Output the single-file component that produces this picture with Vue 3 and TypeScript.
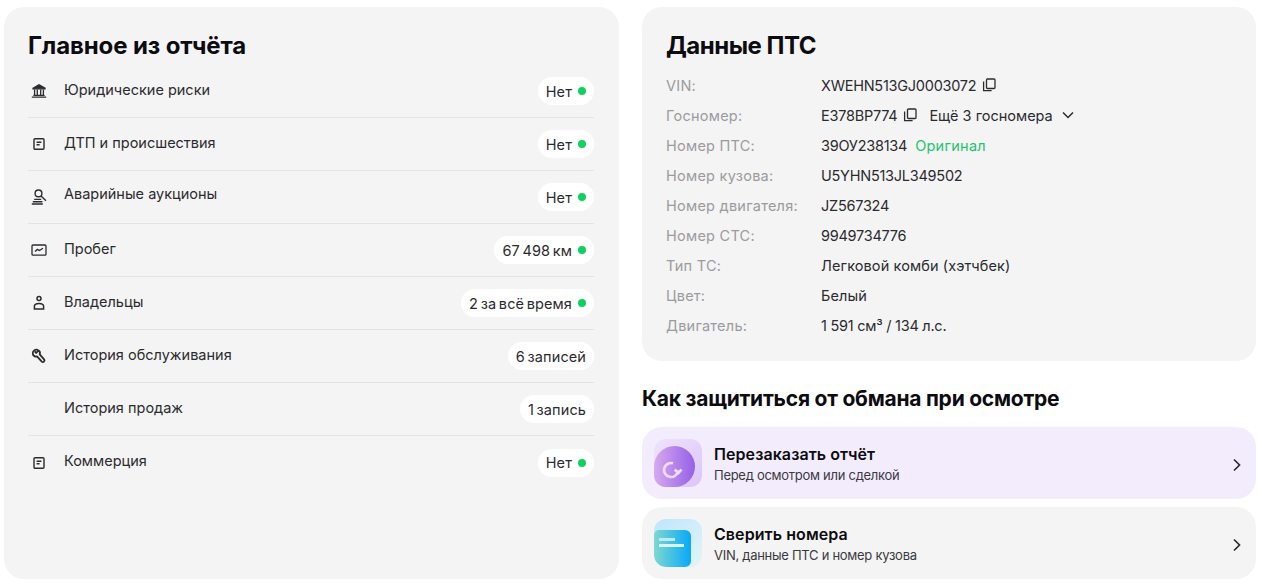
<script setup lang="ts">
interface Row { label: string; value: string; dot: boolean; icon: string }
const rows: Row[] = [
  { label: 'Юридические риски', value: 'Нет', dot: true, icon: 'bank' },
  { label: 'ДТП и происшествия', value: 'Нет', dot: true, icon: 'doc' },
  { label: 'Аварийные аукционы', value: 'Нет', dot: true, icon: 'gavel' },
  { label: 'Пробег', value: '67 498 км', dot: true, icon: 'chart' },
  { label: 'Владельцы', value: '2 за всё время', dot: true, icon: 'person' },
  { label: 'История обслуживания', value: '6 записей', dot: false, icon: 'wrench' },
  { label: 'История продаж', value: '1 запись', dot: false, icon: '' },
  { label: 'Коммерция', value: 'Нет', dot: true, icon: 'doc' },
]
const specs = [
  ['Номер кузова:', 'U5YHN513JL349502', 'lat'],
  ['Номер двигателя:', 'JZ567324', 'lat'],
  ['Номер СТС:', '9949734776', 'lat'],
  ['Тип ТС:', 'Легковой комби (хэтчбек)', 'cyr'],
  ['Цвет:', 'Белый', 'cyr'],
  ['Двигатель:', '1 591 см³ / 134 л.с.', 'lat'],
]
</script>

<template>
  <div class="page">
    <section class="card left">
      <h2 class="title title-main">Главное из отчёта</h2>
      <ul class="rows">
        <li v-for="r in rows" :key="r.label" class="row">
          <span class="ico">
            <svg v-if="r.icon === 'bank'" viewBox="0 0 16 16" width="16" height="16" fill="none" stroke="#2b2b2f" stroke-width="1.3">
              <path d="M2 5.2 8 1.800l6 3.400v.6H2z" fill="#2b2b2f" />
              <path d="M3.600 6.500v5.500M6.300 6.500v5.500M9.700 6.500v5.500M12.400 6.500v5.500M2.400 12.400h11.200M.8 14.200h14.400" />
            </svg>
            <svg v-else-if="r.icon === 'doc'" viewBox="0 0 16 16" width="16" height="16" fill="none" stroke="#2b2b2f" stroke-width="1.4">
              <rect x="3" y="2.700" width="10" height="10.600" rx="1" />
              <path d="M5.600 6.200h4.800M5.600 8.800h3" />
            </svg>
            <svg v-else-if="r.icon === 'gavel'" viewBox="0 0 16 16" width="16" height="16" fill="none" stroke="#2b2b2f" stroke-width="1.400">
              <circle cx="7.500" cy="4.400" r="3.400" />
              <path d="m10 7 5 4.800M3.200 10.400h7M1.800 12.700h9.600M.8 15h11" />
            </svg>
            <svg v-else-if="r.icon === 'chart'" viewBox="0 0 16 16" width="16" height="16" fill="none" stroke="#2b2b2f" stroke-width="1.300">
              <rect x="1" y="3" width="14" height="10.200" rx="1" />
              <path d="m4 9.400 2.400-2 2 1.200L12 6.200" />
            </svg>
            <svg v-else-if="r.icon === 'person'" viewBox="0 0 16 16" width="16" height="16" fill="none" stroke="#2b2b2f" stroke-width="1.500">
              <circle cx="8" cy="3.400" r="2" />
              <path d="M3.400 14v-2.800C3.400 9.600 5 8.400 8 8.400s4.600 1.200 4.600 2.800V14z" />
            </svg>
            <svg v-else-if="r.icon === 'wrench'" viewBox="0 0 16 16" width="16" height="16" fill="none" stroke="#2b2b2f" stroke-width="1.800" stroke-linejoin="round">
              <path d="M6.800 1.800C4.200.9 1.500 3 1.800 5.600 2 8 4.400 9 6 8.400l4.800 5.200c1.400 1.300 3.600-.6 2.300-2.300L8.700 6.300C9.300 4.700 8.800 3.200 7.600 2.400L5.200 5 3.800 3.400" />
            </svg>
          </span>
          <span class="label">{{ r.label }}</span>
          <span class="pill">{{ r.value }}<i v-if="r.dot" class="dot"></i></span>
        </li>
      </ul>
    </section>

    <div class="col">
      <section class="card specs">
        <h2 class="title title-pts">Данные ПТС</h2>
        <dl class="grid">
          <dt>VIN:</dt>
          <dd class="lat">XWEHN513GJ0003072<svg class="copy" viewBox="0 0 14 14" width="14" height="14" fill="none" stroke="#2b2b2f" stroke-width="1.300"><rect x="4.500" y="1" width="8.500" height="9.500" rx="1" /><path d="M1.600 3.400v9.200h8" /></svg></dd>
          <dt>Госномер:</dt>
          <dd class="lat">E378BP774<svg class="copy" viewBox="0 0 14 14" width="14" height="14" fill="none" stroke="#2b2b2f" stroke-width="1.300"><rect x="4.500" y="1" width="8.500" height="9.500" rx="1" /><path d="M1.600 3.400v9.200h8" /></svg><span class="more">Ещё 3 госномера</span><svg class="chev" viewBox="0 0 12 8" width="12" height="8" fill="none" stroke="#2b2b2f" stroke-width="1.500"><path d="m1 1.500 5 5 5-5" /></svg></dd>
          <dt>Номер ПТС:</dt>
          <dd class="lat">39ОУ238134<span class="ok">Оригинал</span></dd>
          <template v-for="s in specs" :key="s[0]">
            <dt>{{ s[0] }}</dt>
            <dd :class="s[2]">{{ s[1] }}</dd>
          </template>
        </dl>
      </section>

      <h3 class="sub">Как защититься от обмана при осмотре</h3>

      <div class="actions">
        <a class="action purple">
          <span class="tile tile-p">
            <span class="blob blob-p"></span>
            <svg class="refresh" viewBox="0 0 24 24" width="24" height="24" fill="none" stroke="#ecdcfb" stroke-width="2.700">
              <path d="M18 12.500A7 7 0 1 1 13 5.300" />
              <path d="m14.800 11.500 3.400 3.500 3.400-3.500" />
            </svg>
          </span>
          <span class="txt"><b>Перезаказать отчёт</b><small>Перед осмотром или сделкой</small></span>
          <svg class="go" viewBox="0 0 8 14" width="8" height="14" fill="none" stroke="#2b2b2f" stroke-width="1.700"><path d="m1 1.500 5.500 5.500L1 12.500" /></svg>
        </a>
        <a class="action grey">
          <span class="tile tile-b">
            <span class="blob blob-b"><i class="l1"></i><i class="l2"></i></span>
          </span>
          <span class="txt"><b>Сверить номера</b><small>VIN, данные ПТС и номер кузова</small></span>
          <svg class="go" viewBox="0 0 8 14" width="8" height="14" fill="none" stroke="#2b2b2f" stroke-width="1.700"><path d="m1 1.500 5.500 5.500L1 12.500" /></svg>
        </a>
      </div>
    </div>
  </div>
</template>

<style>
html, body { margin: 0; background: #fff; }
</style>

<style scoped>
.page {
  display: flex;
  gap: 23px;
  height: 584px;
  box-sizing: border-box;
  padding: 7px 6px 5px 4px;
  font-family: Inter, "Noto Sans", sans-serif;
  color: #2b2b2f;
  overflow: hidden;
}
.card { background: #f4f4f4; border-radius: 20px; box-sizing: border-box; }
.left { width: 615px; padding: 24px 25px 0 24px; }
.col { width: 614px; display: flex; flex-direction: column; }
.title { margin: 0; font-size: 24px; line-height: 30px; font-weight: 700; color: #0c0c10; }
.title-main { letter-spacing: -0.12px; }
.title-pts { letter-spacing: -0.5px; }
.rows { list-style: none; margin: 4px 0 0; padding: 0; }
.row {
  display: flex;
  align-items: center;
  height: 53px;
  border-bottom: 1px solid #e4e4e4;
  box-sizing: border-box;
  font-size: 14.500px;
}
.row:last-child { border-bottom: 0; }
.ico { width: 36px; flex: none; display: flex; padding-left: 3px; box-sizing: border-box; }
.label { flex: 1; margin-bottom: 4px; }
.row:nth-child(3) .label { margin-bottom: 8px; }
.pill {
  display: flex;
  align-items: center;
  gap: 6px;
  height: 28px;
  padding: 0 8px;
  background: #fff;
  border-radius: 14px;
  letter-spacing: 0.1px;
  word-spacing: -1.500px;
}
.dot { width: 8px; height: 8px; border-radius: 50%; background: #0fd25e; }
.specs { flex: none; height: 354px; padding: 24px 24px 0; }
.grid {
  display: grid;
  grid-template-columns: 155px 1fr;
  grid-auto-rows: 30px;
  margin: 0;
  padding-top: 9px;
  font-size: 14.500px;
  align-items: center;
}
dt { color: #9b9b9f; letter-spacing: 0.25px; }
dd { margin: 0; display: flex; align-items: center; }
.lat { letter-spacing: -0.25px; }
.cyr { letter-spacing: 0.1px; }
.copy { flex: none; margin-left: 6px; }
.more { margin-left: 12px; letter-spacing: 0; }
.chev { margin-left: 9px; }
.ok { color: #22c46f; margin-left: 8px; letter-spacing: 0.25px; }
.sub { flex: none; margin: 24px 0 14px; font-size: 21px; line-height: 28px; font-weight: 700; color: #0c0c10; letter-spacing: -0.23px; }
.actions { display: flex; flex-direction: column; gap: 8px; }
.action {
  display: flex;
  align-items: center;
  flex: none;
  height: 72px;
  border-radius: 20px;
  padding: 0 15px 0 12px;
  box-sizing: border-box;
}
.purple { background: #f3ecfd; }
.grey { background: #f4f4f4; }
.tile { width: 48px; height: 48px; border-radius: 12px; position: relative; overflow: hidden; flex: none; }
.tile-p { background: linear-gradient(135deg, #efe3fd, #dcc4fa); }
.tile-b { background: linear-gradient(135deg, #bfe6fb, #e2f4f8); }
.blob { position: absolute; left: 0; bottom: 0; }
.blob-p { width: 41px; height: 41px; background: linear-gradient(90deg, #d8a8ee, #9560e8); border-radius: 50% 50% 50% 8px; }
.refresh { position: absolute; left: 6px; top: 19px; }
.blob-b { height: 37px; width: 37px; background: linear-gradient(90deg, #7ed8cf, #08a8fb); border-radius: 5px 6px 6px 12px; }
.l1, .l2 { position: absolute; left: 5px; height: 2.500px; }
.l1 { top: 8px; width: 16px; background: #bdeaf0; }
.l2 { top: 14px; width: 25px; background: #d8f5f5; }
.txt { flex: 1; margin-left: 12px; padding-top: 1px; display: flex; flex-direction: column; }
.txt b { font-size: 16px; line-height: 22px; font-weight: 600; color: #0c0c10; letter-spacing: 0.08px; }
.txt small { margin-top: 1px; font-size: 13px; line-height: 18px; color: #3a3a3e; letter-spacing: -0.28px; }
.go { flex: none; margin-top: 3px; }
</style>
